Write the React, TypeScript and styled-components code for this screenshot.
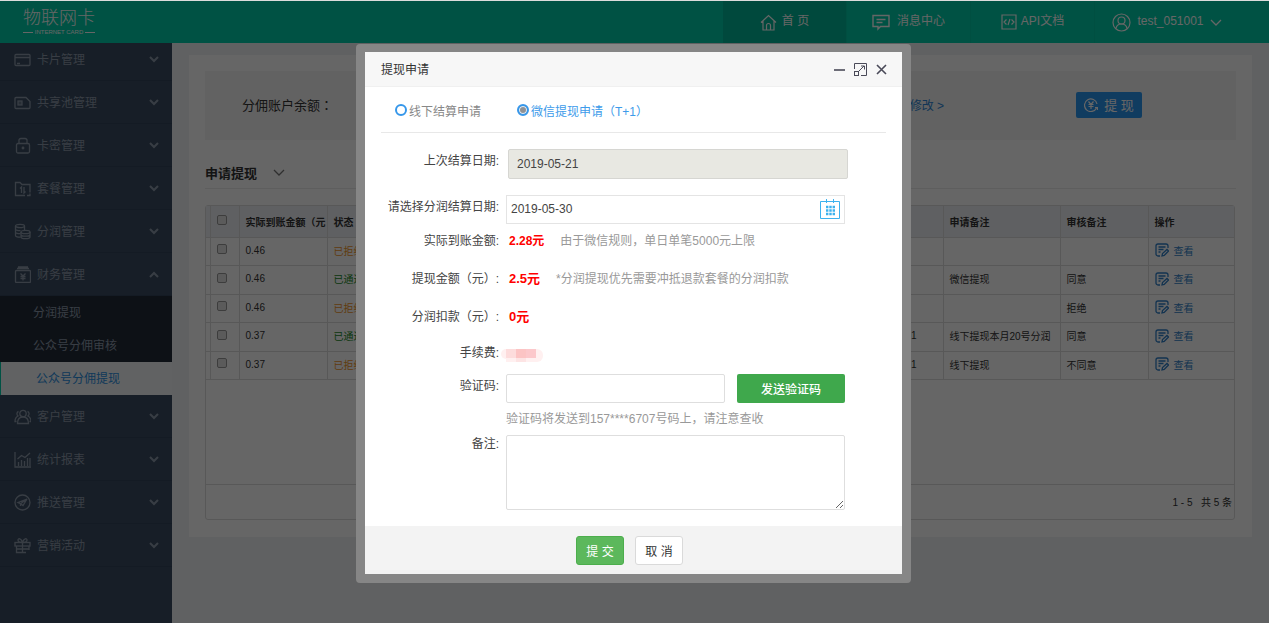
import React from "react";
import styled, { createGlobalStyle, css } from "styled-components";

const GlobalStyle = createGlobalStyle`
  * { box-sizing: border-box; }
  body {
    margin: 0;
    overflow: hidden;
    font-family: "Liberation Sans", "Noto Sans CJK SC", sans-serif;
    font-size: 12px;
    color: #333;
  }
  button, input, textarea { font-family: inherit; font-size: 12px; }
  button { cursor: pointer; }
  a { text-decoration: none; }
`;

/* ---------- page shell ---------- */

const Shell = styled.div`
  min-height: 100vh;
  display: flex;
  flex-direction: column;
  border-top: 1px solid #dcdcdc;
  background: #f0f2f5;
`;

const TopBar = styled.header`
  position: relative;
  z-index: 1;
  display: flex;
  justify-content: space-between;
  height: 42px;
  background: #00cdaa;
  color: #fff;
`;

const Logo = styled.div`
  display: flex;
  flex-direction: column;
  padding: 7px 0 0 23px;
`;

const LogoName = styled.div`
  font-size: 18px;
  line-height: 20px;
  font-weight: 300;
`;

const LogoTag = styled.div`
  display: flex;
  align-items: center;
  justify-content: space-between;
  font-size: 6px;
  line-height: 8px;
  &::before, &::after {
    content: "";
    width: 10px;
    height: 1px;
    background: #fff;
  }
`;

const Nav = styled.nav`
  display: flex;
`;

const NavItem = styled.a<{ $active?: boolean; $wide?: boolean; $gap?: number }>`
  display: flex;
  align-items: center;
  justify-content: center;
  gap: ${(p) => p.$gap ?? 5}px;
  width: ${(p) => (p.$wide ? 174 : 124)}px;
  padding: ${(p) => (p.$wide ? "0 30px 0 0" : "0")};
  color: #fff;
  background: ${(p) => (p.$active ? "#00b798" : "transparent")};
  border-right: ${(p) => (p.$wide ? 0 : 1)}px solid #00c6a3;
  line-height: 16px;
  span { padding-bottom: 2px; }
`;

const Body = styled.div`
  flex: 1;
  display: flex;
`;

/* ---------- side menu ---------- */

const Side = styled.aside`
  width: 172px;
  flex: none;
  margin-top: -5px;
  background: #3a4c61;
  color: #8d9aab;
`;

const MenuItem = styled.a`
  display: flex;
  align-items: center;
  height: 43px;
  padding: 0 12px 0 14px;
  gap: 6px;
  color: inherit;
  border-bottom: 1px solid #34455a;
  svg:last-child { margin-left: auto; }
  span { padding-bottom: 2px; }
`;

const SubMenu = styled.div`
  background: #212c39;
`;

const SubItem = styled.a<{ $active?: boolean }>`
  display: block;
  height: 33px;
  padding-left: 33px;
  line-height: 34px;
  color: inherit;
  ${(p) =>
    p.$active &&
    css`
      padding-left: 35px;
      background: #f2f4f7;
      border-left: 1px solid #00cdaa;
      color: #2a8fe0;
    `}
`;

/* ---------- content ---------- */

const Main = styled.main`
  flex: 1;
  min-width: 0;
  padding: 12px 17px 0;
`;

const Panel = styled.section`
  padding: 16px 16px 17px;
  background: #fff;
`;

const Account = styled.div`
  display: flex;
  align-items: center;
  height: 69px;
  padding: 0 94px 2px 37px;
  background: #f5f5f5;
  font-size: 13px;
`;

/* the Traditional face centres the full-width colon in its cell */
const Colon = styled.span`
  font-family: "Noto Sans CJK TC", sans-serif;
`;

const EditLink = styled.a`
  margin-left: auto;
  margin-right: 132px;
  font-size: 12px;
  color: #2f86d6;
`;

const CashButton = styled.button`
  display: flex;
  align-items: center;
  justify-content: center;
  gap: 6px;
  width: 66px;
  height: 26px;
  padding: 0;
  border: 0;
  border-radius: 2px;
  background: #2a96f0;
  color: #fff;
  font-size: 13px;
  white-space: nowrap;
`;

const Heading = styled.h2`
  display: flex;
  align-items: center;
  gap: 16px;
  height: 49px;
  margin: 0 0 16px;
  padding-top: 16px;
  border-bottom: 1px solid #ececec;
  font-size: 13px;
  svg { color: #777; }
`;

const Grid = styled.div`
  display: flex;
  flex-direction: column;
  height: 315px;
  margin-right: 1px;
  border: 1px solid #dcdcdc;
  border-radius: 3px;
`;

const Table = styled.table`
  width: 100%;
  table-layout: fixed;
  border-collapse: collapse;
  font-size: 10px;
  th, td {
    padding: 0 6px;
    border-right: 1px solid #dcdcdc;
    border-bottom: 1px solid #dcdcdc;
    text-align: left;
    white-space: nowrap;
    overflow: hidden;
  }
  td { padding-bottom: 2px; }
  th:last-child, td:last-child { border-right: 0; }
  th { height: 31px; background: #eef1f5; }
  td { height: 28px; }
  tbody tr:nth-child(even) td { height: 29px; }
`;

const Tick = styled.input`
  appearance: none;
  display: block;
  width: 10px;
  height: 10px;
  margin: 0 0 2px;
  border: 1px solid #999;
  border-radius: 2px;
  background: #e4e4e4;
`;

const Status = styled.span<{ $ok: boolean }>`
  color: ${(p) => (p.$ok ? "#1a8a2a" : "#f0962a")};
`;

const ViewLink = styled.a`
  display: flex;
  align-items: center;
  gap: 5px;
  color: #2f7fc8;
`;

const Pager = styled.div`
  margin-top: auto;
  height: 35px;
  padding-right: 2px;
  border-top: 1px solid #dcdcdc;
  font-size: 10px;
  line-height: 36px;
  text-align: right;
  white-space: pre;
`;

/* ---------- dialog ---------- */

const Overlay = styled.div`
  position: fixed;
  inset: 1px 0 0;
  z-index: 2;
  display: flex;
  align-items: center;
  justify-content: center;
  padding: 2px 2px 0 0;
  background: rgba(0, 0, 0, 0.6);
`;

const Frame = styled.div`
  width: 555px;
  max-width: calc(100% - 32px);
  padding: 8px 9px 9px;
  border-radius: 4px;
  background: #868686;
`;

const Dialog = styled.section`
  background: #fff;
`;

const DialogHead = styled.header`
  display: flex;
  align-items: center;
  justify-content: space-between;
  height: 35px;
  padding: 0 14px 0 16px;
  border-bottom: 1px solid #f0f0f0;
  background: #f7f7f7;
`;

const DialogTitle = styled.h1`
  margin: 0;
  font-size: 12px;
  font-weight: 400;
`;

const HeadTools = styled.div`
  display: flex;
  gap: 8px;
  padding-top: 2px;
`;

const ToolButton = styled.button`
  display: flex;
  padding: 0;
  border: 0;
  background: none;
  color: #4a4a58;
`;

const Form = styled.form`
  display: block;
`;

const Choices = styled.div`
  display: flex;
  align-items: center;
  gap: 36px;
  height: 46px;
  margin: 0 16px;
  padding: 2px 0 0 14px;
  border-bottom: 1px solid #e8e8e8;
`;

const Choice = styled.label<{ $on?: boolean }>`
  display: flex;
  align-items: center;
  gap: 2px;
  color: ${(p) => (p.$on ? "#3d9bea" : "#888")};
`;

const Radio = styled.input`
  appearance: none;
  width: 12px;
  height: 12px;
  margin: 0;
  border: 2px solid #3697ea;
  border-radius: 50%;
  &:checked {
    background: #8f9296;
    box-shadow: inset 0 0 0 1px #e4eef8;
  }
`;

const Fields = styled.div`
  padding: 16px 57px 16px 16px;
`;

const Row = styled.div<{ $top?: number }>`
  display: flex;
  align-items: flex-start;
  gap: 7px;
  margin-top: ${(p) => p.$top ?? 0}px;
`;

const Caption = styled.label<{ $tall?: boolean }>`
  flex: none;
  width: 118px;
  text-align: right;
  white-space: nowrap;
  color: #444;
  line-height: ${(p) => (p.$tall ? 24 : 18)}px;
`;

const inputLook = css`
  height: 29px;
  border: 1px solid #dedede;
  border-radius: 2px;
  background: #fff;
  color: #444;
  outline: 0;
`;

const LastDate = styled.input`
  ${inputLook}
  flex: 1;
  min-width: 0;
  height: 30px;
  margin: 0 -3px 0 2px;
  padding: 0 8px;
  border-color: #d6d6d2;
  background: #e8e8e2;
`;

const DateBox = styled.div`
  ${inputLook}
  flex: 1;
  display: flex;
  align-items: center;
  padding-right: 4px;
  border-radius: 0;
  border-color: #e4e4e4;
`;

const DateInput = styled.input`
  flex: 1;
  min-width: 0;
  padding: 0 4px;
  border: 0;
  outline: 0;
  background: none;
  color: #444;
`;

const Amount = styled.output<{ $big?: boolean }>`
  padding-left: 3px;
  color: #f00;
  font-weight: 700;
  font-size: ${(p) => (p.$big ? 13 : 12)}px;
  line-height: 18px;
`;

const Hint = styled.span<{ $indent?: number }>`
  padding-left: ${(p) => p.$indent ?? 0}px;
  color: #999;
  line-height: 18px;
  white-space: nowrap;
`;

const Mosaic = styled.span`
  display: flex;
  align-items: flex-start;
  margin-left: -5px;
  padding-top: 5px;
  height: 18px;
  i { width: 10px; height: 13px; border-bottom: 4px solid #fff0f0; }
  i:nth-child(1) { width: 5px; height: 10px; border: 0; background: #fff0f0; border-radius: 5px 0 0 5px; }
  i:nth-child(2) { background: #fddcdc; }
  i:nth-child(3) { background: #fcc4c4; border-color: #fde4e4; }
  i:nth-child(4) { background: #fcc8cb; }
  i:nth-child(5) { width: 7px; border: 0; background: #fff0f0; border-radius: 0 6px 6px 0; }
`;

const CodeInput = styled.input`
  ${inputLook}
  flex: 1;
  min-width: 0;
`;

const SendButton = styled.button`
  width: 108px;
  height: 29px;
  margin-left: 5px;
  padding: 0;
  border: 0;
  border-radius: 2px;
  background: #3fa84c;
  color: #fff;
  font-weight: 500;
`;

const Note = styled.textarea`
  ${inputLook}
  display: block;
  flex: 1;
  height: 75px;
`;

const DialogFoot = styled.footer`
  display: flex;
  justify-content: center;
  gap: 11px;
  height: 48px;
  padding: 10px 8px 0 0;
  background: #f3f3f3;
`;

const FootButton = styled.button<{ $primary?: boolean }>`
  width: 48px;
  height: 29px;
  padding: 0;
  border: 1px solid ${(p) => (p.$primary ? "#4cae4c" : "#dadada")};
  border-radius: 3px;
  background: ${(p) => (p.$primary ? "#5cb85c" : "#fff")};
  color: ${(p) => (p.$primary ? "#fff" : "#333")};
`;

/* ---------- icons ---------- */

const Icon = ({ size = 17, children, w = 1 }: { size?: number; w?: number; children: React.ReactNode }) => (
  <svg width={size} height={size} viewBox={`0 0 ${size} ${size}`} fill="none" stroke="currentColor" strokeWidth={w} aria-hidden="true">
    {children}
  </svg>
);

const Chevron = ({ up }: { up?: boolean }) => (
  <svg width="12" height="12" viewBox="0 0 12 12" fill="none" stroke="currentColor" strokeWidth="2" aria-hidden="true">
    <path d={up ? "M2 9l4-4 4 4" : "M2 4l4 4 4-4"} />
  </svg>
);

const ThinChevron = () => (
  <svg width="12" height="12" viewBox="0 0 12 12" fill="none" stroke="currentColor" strokeWidth="1.3" aria-hidden="true">
    <path d="M1 4l5 5 5-5" />
  </svg>
);

const menu: { name: string; icon: React.ReactNode; open?: boolean }[] = [
  { name: "卡片管理", icon: <><rect x="1" y="3.5" width="15" height="11" rx="1" /><path d="M1 6.5h15M3 12.5h3" /></> },
  { name: "共享池管理", icon: <><path d="M2 3.500h10l4 4v6a1 1 0 0 1-1 1H2a1 1 0 0 1-1-1v-9a1 1 0 0 1 1-1z" /><rect x="4" y="7" width="4" height="4" fill="currentColor" fillOpacity=".5" /></> },
  { name: "卡密管理", icon: <><rect x="2.500" y="6.500" width="13" height="9.500" rx="1.500" /><path d="M5 6.500V4a2 2 0 0 1 2-2.500h4A2 2 0 0 1 13 4v2.500" /><circle cx="9" cy="11" r=".8" /></> },
  { name: "套餐管理", icon: <><path d="M11 15.500H1.500v-13H6l2 2h8v8M13 15.500h3v-2" /><path d="M7.500 13V7L6 8.500M10 7v6l1.500-1.500" /></> },
  { name: "分润管理", icon: <><ellipse cx="6" cy="3" rx="4.500" ry="1.700" /><path d="M1.500 3v9.500c0 1 2 1.700 5 1.700M10.500 3v4M1.500 6c0 1 2 1.700 5 1.700M1.500 9c0 1 2 1.700 5 1.700" /><ellipse cx="11.500" cy="9" rx="4.500" ry="1.700" /><path d="M7 9v5c0 1 2 1.700 4.500 1.700S16 15 16 14V9M7 11.500c0 1 2 1.700 4.500 1.700s4.500-.7 4.500-1.700" /></> },
  { name: "财务管理", open: true, icon: <><rect x="1.500" y="4.500" width="15" height="12" rx="1" /><path d="M3 2.500h12M4 1h10M6.500 7.500L9 10l2.500-2.500M9 10v4.500M6.500 10.500h5M6.500 12.500h5" /></> },
  { name: "客户管理", icon: <><circle cx="9" cy="5.500" r="3.200" /><path d="M3.500 15.500c0-4 2-6.500 5.500-6.500s5.500 2.500 5.500 6.500zM4.500 3.500C2.500 4 2.500 7 4 8c-2 1-3 3-3 5.500h1.500M13.500 3.500c2 .5 2 3.500.5 4.500 2 1 3 3 3 5.500h-1.500" /></> },
  { name: "统计报表", icon: <><path d="M1 1v15h16M4.500 15v-4M7.500 15V9M10.500 15v-5M13.500 15V7M16 15V7M3.500 8l4-3.500 3.500 2L16 2" /></> },
  { name: "推送管理", icon: <><circle cx="8.500" cy="8.500" r="7.500" /><path d="M13 5L4 8.500l2.500 1.200L13 5 9 11.500l-2.500-1.800V12" /></> },
  { name: "营销活动", icon: <><rect x="1" y="5.500" width="15" height="3.500" /><path d="M2.500 9v6.500H12M15 9v4M8.500 5.500v10M8.500 5.500C6 5.500 4 4.500 4 3s3-2.500 4.500 2.500C10 .5 13 1.500 13 3s-2 2.500-4.500 2.500M2.500 12h12" /></> },
];

const rows = [
  { id: 1, money: "0.46", ok: false, user: "", apply: "", audit: "" },
  { id: 2, money: "0.46", ok: true, user: "", apply: "微信提现", audit: "同意" },
  { id: 3, money: "0.46", ok: false, user: "", apply: "", audit: "拒绝" },
  { id: 4, money: "0.37", ok: true, user: "test_051001", apply: "线下提现本月20号分润", audit: "同意" },
  { id: 5, money: "0.37", ok: false, user: "test_051001", apply: "线下提现", audit: "不同意" },
];

function SideMenu() {
  return (
    <Side>
      {menu.map((m) => (
        <React.Fragment key={m.name}>
          <MenuItem href="#">
            <Icon w={1.3}>{m.icon}</Icon>
            <span>{m.name}</span>
            <Chevron up={m.open} />
          </MenuItem>
          {m.open && (
            <SubMenu>
              <SubItem href="#">分润提现</SubItem>
              <SubItem href="#">公众号分佣审核</SubItem>
              <SubItem href="#" $active>公众号分佣提现</SubItem>
            </SubMenu>
          )}
        </React.Fragment>
      ))}
    </Side>
  );
}

function RecordTable() {
  return (
    <Table>
      <colgroup>
        <col style={{ width: 4 }} />
        <col style={{ width: 29 }} />
        <col style={{ width: 88 }} />
        <col style={{ width: 60 }} />
        <col />
        <col style={{ width: 88 }} />
        <col style={{ width: 117 }} />
        <col style={{ width: 88 }} />
        <col style={{ width: 86 }} />
      </colgroup>
      <thead>
        <tr>
          <th />
          <th><Tick type="checkbox" aria-label="全选" /></th>
          <th>实际到账金额（元</th>
          <th>状态</th>
          <th />
          <th />
          <th>申请备注</th>
          <th>审核备注</th>
          <th>操作</th>
        </tr>
      </thead>
      <tbody>
        {rows.map((r) => (
          <tr key={r.id}>
            <td />
            <td><Tick type="checkbox" aria-label={r.money} /></td>
            <td>{r.money}</td>
            <td><Status $ok={r.ok}>{r.ok ? "已通过" : "已拒绝"}</Status></td>
            <td />
            <td>{r.user}</td>
            <td>{r.apply}</td>
            <td>{r.audit}</td>
            <td>
              <ViewLink href="#">
                <Icon size={14} w={1.3}>
                  <path d="M5 13H3a2 2 0 0 1-2-2V3a2 2 0 0 1 2-2h8a2 2 0 0 1 2 2v2M3.500 4h7M3.500 6.500h5M3.500 9h2M7 13l.5-2.500L12 6.500l1.500 1.500-4.300 4.500z" />
                </Icon>
                查看
              </ViewLink>
            </td>
          </tr>
        ))}
      </tbody>
    </Table>
  );
}

function WithdrawDialog() {
  return (
    <Overlay>
      <Frame>
        <Dialog role="dialog" aria-labelledby="dlg-title">
          <DialogHead>
            <DialogTitle id="dlg-title">提现申请</DialogTitle>
            <HeadTools>
              <ToolButton type="button" aria-label="最小化">
                <Icon size={13} w={1.6}><path d="M1 7h11" /></Icon>
              </ToolButton>
              <ToolButton type="button" aria-label="最大化">
                <Icon size={13}>
                  <path d="M.5 6V.5h12v12H7" />
                  <rect x=".5" y="8.500" width="4" height="4" />
                  <path d="M5 8l5-5M7 3h3.500v3.500" />
                </Icon>
              </ToolButton>
              <ToolButton type="button" aria-label="关闭">
                <Icon size={13} w={1.6}><path d="M2 2l9 9M11 2l-9 9" /></Icon>
              </ToolButton>
            </HeadTools>
          </DialogHead>
          <Form>
            <Choices>
              <Choice><Radio type="radio" name="kind" />线下结算申请</Choice>
              <Choice $on><Radio type="radio" name="kind" defaultChecked />微信提现申请（T+1）</Choice>
            </Choices>
            <Fields>
              <Row>
                <Caption $tall htmlFor="last">上次结算日期:</Caption>
                <LastDate id="last" readOnly value="2019-05-21" />
              </Row>
              <Row $top={16}>
                <Caption $tall htmlFor="date">请选择分润结算日期:</Caption>
                <DateBox>
                  <DateInput id="date" defaultValue="2019-05-30" />
                  <svg width="20" height="20" viewBox="0 0 20 20" fill="none" stroke="#3db2ee" aria-hidden="true">
                    <path d="M.5 2.500h19v17H.5zM6.500 0v4M13.500 0v4" />
                    <path d="M6 8h9M6 11.500h9M6 15h9" strokeWidth="2.400" strokeDasharray="2.400 .9" />
                  </svg>
                </DateBox>
              </Row>
              <Row $top={8}>
                <Caption htmlFor="real">实际到账金额:</Caption>
                <Amount id="real">2.28元</Amount>
                <Hint $indent={9}>由于微信规则，单日单笔5000元上限</Hint>
              </Row>
              <Row $top={20}>
                <Caption htmlFor="cash">提现金额（元）:</Caption>
                <Amount id="cash" $big>2.5元</Amount>
                <Hint $indent={9}>*分润提现优先需要冲抵退款套餐的分润扣款</Hint>
              </Row>
              <Row $top={20}>
                <Caption htmlFor="cut">分润扣款（元）:</Caption>
                <Amount id="cut" $big>0元</Amount>
              </Row>
              <Row $top={18}>
                <Caption as="span">手续费:</Caption>
                <Mosaic><i /><i /><i /><i /><i /></Mosaic>
              </Row>
              <Row $top={12}>
                <Caption $tall htmlFor="code">验证码:</Caption>
                <CodeInput id="code" />
                <SendButton type="button">发送验证码</SendButton>
              </Row>
              <Row $top={7}>
                <Caption as="span" />
                <Hint>验证码将发送到157****6707号码上，请注意查收</Hint>
              </Row>
              <Row $top={7}>
                <Caption htmlFor="note">备注:</Caption>
                <Note id="note" />
              </Row>
            </Fields>
            <DialogFoot>
              <FootButton type="button" $primary>提 交</FootButton>
              <FootButton type="button">取 消</FootButton>
            </DialogFoot>
          </Form>
        </Dialog>
      </Frame>
    </Overlay>
  );
}

export default function App() {
  return (
    <>
      <GlobalStyle />
      <Shell>
        <TopBar>
          <Logo>
            <LogoName>物联网卡</LogoName>
            <LogoTag>INTERNET CARD</LogoTag>
          </Logo>
          <Nav>
            <NavItem href="#" $active>
              <Icon w={1.2}><path d="M1 8.500l7.500-7 7.500 7M3 7v9h11V7M6.500 16v-4.500a2 2 0 0 1 4 0V16" /></Icon>
              <span>首 页</span>
            </NavItem>
            <NavItem href="#" $gap={7}>
              <Icon size={18} w={1.4}><path d="M1 2.500h16v11H8.500L6 16v-2.500H1zM4.500 6.500h9M4.500 9.500h6" /></Icon>
              <span>消息中心</span>
            </NavItem>
            <NavItem href="#" $gap={4}>
              <Icon size={16} w={1.2}><path d="M1 1h14v14H1zM5.500 5.500L3 8l2.500 2.500M10.500 5.500L13 8l-2.500 2.500M9 5l-2 6" /></Icon>
              <span>API文档</span>
            </NavItem>
            <NavItem href="#" $wide $gap={6}>
              <Icon size={19} w={1.2}>
                <circle cx="9.500" cy="9.500" r="8.500" />
                <circle cx="9.500" cy="7.500" r="3.500" />
                <path d="M4 15.500c.5-3 2.500-4.500 5.500-4.500s5 1.500 5.500 4.500" />
              </Icon>
              <span>test_051001</span>
              <ThinChevron />
            </NavItem>
          </Nav>
        </TopBar>
        <Body>
          <SideMenu />
          <Main>
            <Panel>
              <Account>
                <span>分佣账户余额<Colon>：</Colon></span>
                <EditLink href="#">修改 &gt;</EditLink>
                <CashButton type="button">
                  <Icon size={14} w={1.2}>
                    <path d="M12.500 10A6.300 6.300 0 1 1 13 6M4.500 3.500L7 6.500l2.500-3M7 6.500V11M4.500 6.500h5M4.500 8.500h5M11 9.500h2.500V12" />
                  </Icon>
                  提 现
                </CashButton>
              </Account>
              <Heading>申请提现<ThinChevron /></Heading>
              <Grid>
                <RecordTable />
                <Pager>{"1 - 5   共 5 条"}</Pager>
              </Grid>
            </Panel>
          </Main>
        </Body>
      </Shell>
      <WithdrawDialog />
    </>
  );
}
